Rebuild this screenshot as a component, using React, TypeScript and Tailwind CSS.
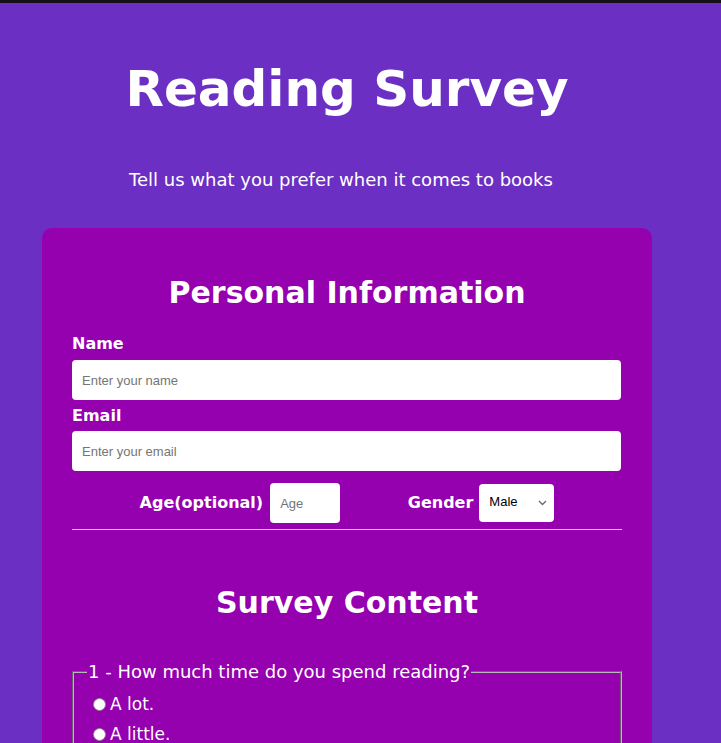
import { FunctionComponent } from "react";

const verdana = { fontFamily: '"DejaVu Sans", Verdana, sans-serif' };
const arial = { fontFamily: '"Liberation Sans", Arial, sans-serif' };

const App: FunctionComponent = () => {
  return (
    <div
      className="min-h-[743px] w-full bg-[#6b2fc3] border-t-[3px] border-[#14101c] text-white overflow-hidden"
      style={verdana}
    >
      <div className="w-[694px]">
        <h1 className="pt-[58px] text-center text-[50px] font-bold leading-[56px]">
          Reading Survey
        </h1>
        <p className="mt-[51px] pr-[12px] text-center text-[18px] leading-[24px]">
          Tell us what you prefer when it comes to books
        </p>

        <form className="mx-[42px] mt-[36px] rounded-[10px] bg-[#9500af] px-[30px] pt-[46px] pb-10">
          <h2 className="text-center text-[30px] font-bold leading-[38px]">
            Personal Information
          </h2>

          <label className="mt-[22px] block text-[16px] font-bold leading-[20px]">
            Name
          </label>
          <input
            type="text"
            placeholder="Enter your name"
            className="mt-[6px] block h-[40px] w-[549px] rounded-[4px] bg-white px-[10px] text-[13px] text-black placeholder:text-[#757575] outline-none"
            style={arial}
          />
          <label className="mt-[6px] block text-[16px] font-bold leading-[20px]">
            Email
          </label>
          <input
            type="email"
            placeholder="Enter your email"
            className="mt-[5px] block h-[40px] w-[549px] rounded-[4px] bg-white px-[10px] text-[13px] text-black placeholder:text-[#757575] outline-none"
            style={arial}
          />

          <div className="mt-[12px] flex items-center justify-evenly">
            <div className="flex items-center gap-[7px]">
              <span className="text-[16px] font-bold">Age(optional)</span>
              <input
                type="number"
                placeholder="Age"
                className="h-[40px] w-[70px] rounded-[4px] bg-white px-[10px] text-[13px] text-black placeholder:text-[#757575] outline-none"
                style={arial}
              />
            </div>
            <div className="flex items-center gap-[6px]">
              <span className="text-[16px] font-bold">Gender</span>
              <div className="relative h-[38px] w-[75px] rounded-[4px] bg-white">
                <span
                  className="absolute left-[10px] top-[10px] text-[13px] leading-[16px] text-black"
                  style={arial}
                >
                  Male
                </span>
                <svg
                  className="absolute right-[7px] top-[16px]"
                  width="9"
                  height="6"
                  viewBox="0 0 9 6"
                  fill="none"
                >
                  <path d="M1 1l3.5 3.5L8 1" stroke="#6b6b6b" strokeWidth="1.4" />
                </svg>
              </div>
            </div>
          </div>

          <hr className="mt-[6px] border-0 border-t border-[#e6c8e6]" />

          <h2 className="mt-[54px] text-center text-[30px] font-bold leading-[38px]">
            Survey Content
          </h2>

          <fieldset className="mt-[39px] border-2 border-[#b8b8b8] [border-style:groove] pl-[13px] pr-4 pt-[6px] pb-4">
            <legend className="px-[1px] text-[18px] leading-[22px]">
              1 - How much time do you spend reading?
            </legend>
            {["A lot.", "A little.", "Not at all."].map((opt) => (
              <label
                key={opt}
                className="ml-[6px] flex items-center gap-[4px] text-[17px] leading-[30px]"
              >
                <span className="inline-block h-[13px] w-[13px] rounded-full border border-[#8a8a8a] bg-white" />
                {opt}
              </label>
            ))}
          </fieldset>
        </form>
      </div>
    </div>
  );
};

export default App;
